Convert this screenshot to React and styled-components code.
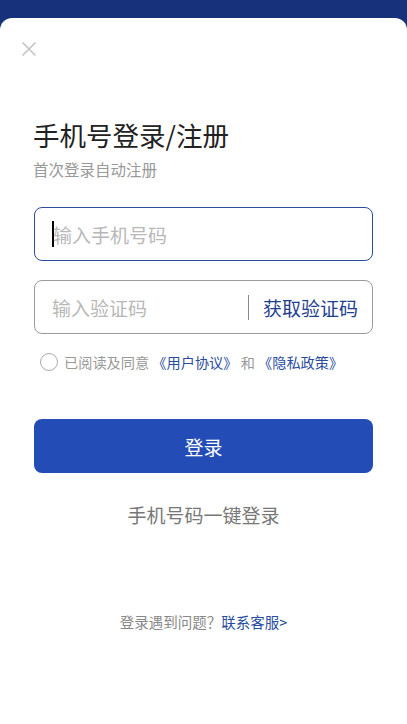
import React from 'react'
import styled, { createGlobalStyle } from 'styled-components'

const GlobalStyle = createGlobalStyle`
  html, body {
    margin: 0;
    padding: 0;
    background: #17317b;
    font-family: "Noto Sans CJK SC", "Noto Sans", sans-serif;
  }
  * { box-sizing: border-box; }
`

const Page = styled.div`
  min-height: 724px;
  padding-top: 18px;
  background: #17317b;
  display: flex;
  flex-direction: column;
`

const Sheet = styled.div`
  flex: 1;
  min-height: 706px;
  background: #fff;
  border-radius: 12px 12px 0 0;
  padding: 22px 34px 0 34px;
  display: flex;
  flex-direction: column;
`

const Close = styled.button`
  width: 18px;
  height: 18px;
  margin-left: -14px;
  padding: 0;
  border: none;
  background: none;
  display: flex;
  align-items: center;
  justify-content: center;
`

const Title = styled.h1`
  margin: 59px 0 0 -1px;
  font-size: 26.5px;
  font-weight: 400;
  line-height: 36px;
  color: #222;
`

const Subtitle = styled.p`
  margin: 6px 0 0 -1px;
  font-size: 15.5px;
  line-height: 20px;
  color: #999;
`

const Field = styled.div`
  height: 54px;
  margin-top: ${p => p.$top}px;
  border: 1px solid ${p => (p.$active ? '#2c4c9c' : '#9a9a9f')};
  border-radius: 8px;
  display: flex;
  align-items: center;
  padding: 0 14px 0 17px;
`

const Placeholder = styled.span`
  flex: 1;
  font-size: 19px;
  color: #b8b8b8;
  display: flex;
  align-items: center;
`

const Caret = styled.span`
  display: inline-block;
  width: 2px;
  height: 26px;
  background: #000;
  margin-right: -1px;
`

const Divider = styled.span`
  width: 1px;
  height: 25px;
  background: #888;
  margin-right: 14px;
`

const CodeLink = styled.span`
  font-size: 19px;
  color: #1f3f8f;
`

const Agree = styled.div`
  margin-top: 18px;
  display: flex;
  align-items: center;
  font-size: 14.2px;
  color: #999;
  padding-left: 6px;
`

const Radio = styled.span`
  width: 18px;
  height: 18px;
  border: 1px solid #aaa;
  border-radius: 50%;
  margin-right: 6px;
`

const Link = styled.span`
  color: #2a4c9e;
`

const LoginButton = styled.button`
  margin-top: 47px;
  height: 54px;
  border: none;
  border-radius: 8px;
  background: #234cb6;
  color: #fff;
  font-family: inherit;
  font-size: 19px;
`

const OneKey = styled.div`
  margin-top: 28px;
  text-align: center;
  font-size: 19px;
  color: #777;
`

const Help = styled.div`
  margin-top: 83px;
  text-align: center;
  font-size: 14.5px;
  color: #888;
`

export default function App() {
  return (
    <>
      <GlobalStyle />
      <Page>
        <Sheet>
          <Close aria-label="close">
            <svg width="16" height="16" viewBox="0 0 16 16">
              <path d="M1.5 1.5 L14.5 14.5 M14.5 1.5 L1.5 14.5" stroke="#c4c4c4" strokeWidth="1.6" />
            </svg>
          </Close>
          <Title>手机号登录/注册</Title>
          <Subtitle>首次登录自动注册</Subtitle>
          <Field $top={28} $active>
            <Placeholder><Caret />输入手机号码</Placeholder>
          </Field>
          <Field $top={19}>
            <Placeholder>输入验证码</Placeholder>
            <Divider />
            <CodeLink>获取验证码</CodeLink>
          </Field>
          <Agree>
            <Radio />
            已阅读及同意&nbsp;<Link>《用户协议》</Link>&nbsp;和&nbsp;<Link>《隐私政策》</Link>
          </Agree>
          <LoginButton>登录</LoginButton>
          <OneKey>手机号码一键登录</OneKey>
          <Help>登录遇到问题？<Link>联系客服&gt;</Link></Help>
        </Sheet>
      </Page>
    </>
  )
}
